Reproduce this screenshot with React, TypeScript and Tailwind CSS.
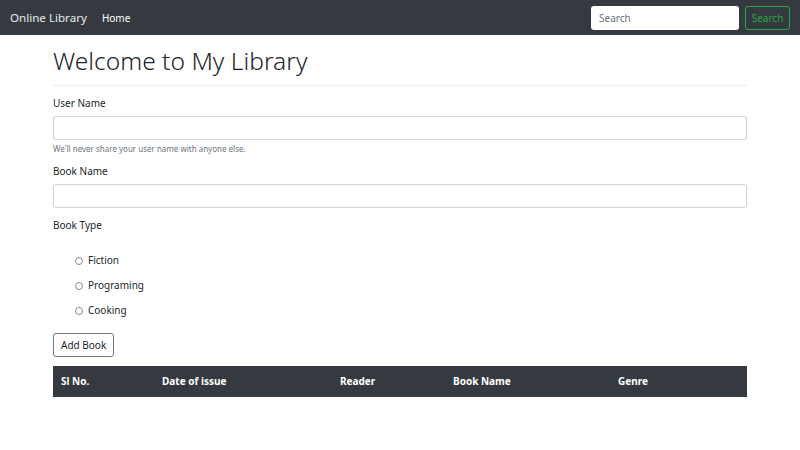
import React from "react";

const font = { fontFamily: '"Noto Sans", "Open Sans", sans-serif' };

const columns = [
    { name: "Sl No.", width: "w-[101px]" },
    { name: "Date of issue", width: "w-[178px]" },
    { name: "Reader", width: "w-[113px]" },
    { name: "Book Name", width: "w-[165px]" },
    { name: "Genre", width: "flex-1" },
];

const bookTypes = ["Fiction", "Programing", "Cooking"];

function Navbar() {
    return (
        <nav className="h-[35px] bg-[#343a40] flex items-center pl-[10px] pr-[10px]">
            <span className="text-[11.6px] text-white/90 mr-[15px] leading-none">Online Library</span>
            <span className="text-[10px] text-white leading-none">Home</span>
            <div className="ml-auto flex items-center gap-[6px]">
                <input
                    placeholder="Search"
                    className="w-[148px] h-[24px] rounded-[3px] bg-white px-[8px] text-[10px] text-gray-700 placeholder:text-[#6c757d] outline-none"
                />
                <button className="w-[45px] h-[24px] rounded-[3px] border border-[#28a745] text-[#28a745] text-[10px] leading-none">
                    Search
                </button>
            </div>
        </nav>
    );
}

export default function App() {
    return (
        <div className="w-[800px] h-[450px] bg-white text-[#212529]" style={font}>
            <Navbar />
            <main className="w-[694px] mx-auto">
                <h1 className="text-[24.6px] leading-[30px] mt-[11px] font-light text-[#212529]">Welcome to My Library</h1>
                <hr className="mt-[9px] border-t border-[#e9ecef]" />

                <label className="block text-[10px] leading-[15px] mt-[10px]">User Name</label>
                <input className="block w-full h-[24px] mt-[5px] rounded-[3px] border border-[#ced4da] outline-none" />
                <p className="text-[8px] leading-[12px] mt-[3px] text-[#6c757d]">We'll never share your user name with anyone else.</p>

                <label className="block text-[10px] leading-[15px] mt-[9px]">Book Name</label>
                <input className="block w-full h-[24px] mt-[5px] rounded-[3px] border border-[#ced4da] outline-none" />

                <label className="block text-[10px] leading-[15px] mt-[10px]">Book Type</label>

                <div className="mt-[20px] pl-[22px] flex flex-col gap-[10px]">
                    {bookTypes.map((t) => (
                        <div key={t} className="flex items-center gap-[5px] h-[15px]">
                            <span className="w-[8px] h-[8px] rounded-full border border-[#8a8a8a] bg-white" />
                            <span className="text-[10px] leading-[15px]">{t}</span>
                        </div>
                    ))}
                </div>

                <button className="mt-[15px] h-[24px] px-[7px] rounded-[3px] border border-[#6c757d] text-[10px] leading-none text-[#212529] bg-white">
                    Add Book
                </button>

                <div className="mt-[9px] h-[31px] bg-[#343a40] flex items-center">
                    {columns.map((c) => (
                        <div key={c.name} className={`${c.width} pl-[8px] text-[10px] font-bold text-white`}>
                            {c.name}
                        </div>
                    ))}
                </div>
            </main>
        </div>
    );
}
